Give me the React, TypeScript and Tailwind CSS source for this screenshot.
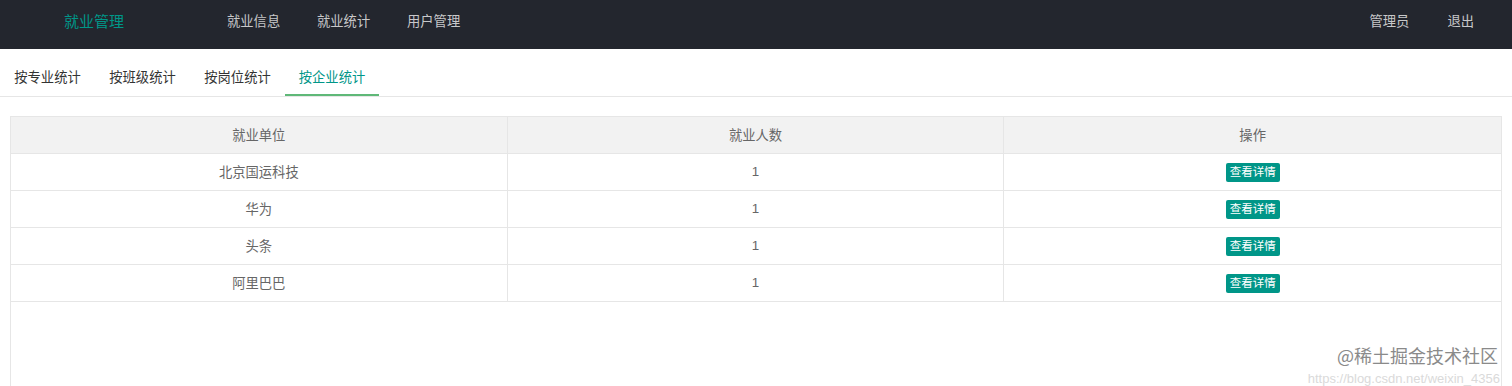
import React from 'react'

const navItems = ['就业信息', '就业统计', '用户管理']
const tabs = ['按专业统计', '按班级统计', '按岗位统计', '按企业统计']
const rows = [
  { name: '北京国运科技', count: 1 },
  { name: '华为', count: 1 },
  { name: '头条', count: 1 },
  { name: '阿里巴巴', count: 1 },
]

const font = { fontFamily: '"Noto Sans CJK SC", "Noto Sans", "Liberation Sans", sans-serif' }

const App: React.FC = () => {
  return (
    <div className="relative h-[386px] overflow-hidden bg-white" style={font}>
      {/* top bar */}
      <header className="h-[49px] bg-[#23262e]">
        <div className="flex h-[42px] items-center">
          <div className="ml-[64px] w-[163px] text-[15px] text-[#009688]">就业管理</div>
          <ul className="flex gap-[34px]">
            {navItems.map((n) => (
              <li key={n} className="w-[56px] text-[13.3px] text-white/75">{n}</li>
            ))}
          </ul>
          <ul className="ml-auto mr-[38px] flex gap-[38px]">
            <li className="text-[13.3px] text-white/75">管理员</li>
            <li className="text-[13.3px] text-white/75">退出</li>
          </ul>
        </div>
      </header>

      {/* tabs */}
      <div className="mt-[10px] flex h-[38px] border-b border-[#e6e6e6]">
        {tabs.map((t, i) => (
          <div
            key={t}
            className={
              i === 3
                ? 'flex w-[94px] items-center justify-center border-b-2 border-[#5fb878] pt-[1px] text-[13.3px] text-[#009688]'
                : 'flex w-[95px] items-center justify-center pb-[1px] text-[13.3px] text-[#333]'
            }
          >
            {t}
          </div>
        ))}
      </div>

      {/* table */}
      <div className="mx-[10px] mt-[19px] h-[300px] border border-[#e6e6e6]">
        <div className="grid h-[37px] grid-cols-3 border-b border-[#e6e6e6] bg-[#f2f2f2] text-[13.3px] text-[#666]">
          <div className="flex items-center justify-center border-r border-[#e6e6e6]">就业单位</div>
          <div className="flex items-center justify-center border-r border-[#e6e6e6]">就业人数</div>
          <div className="flex items-center justify-center">操作</div>
        </div>
        {rows.map((r) => (
          <div key={r.name} className="grid h-[37px] grid-cols-3 border-b border-[#e6e6e6] text-[13.3px] text-[#666]">
            <div className="flex items-center justify-center border-r border-[#e6e6e6]">{r.name}</div>
            <div className="flex items-center justify-center border-r border-[#e6e6e6]" style={{ fontFamily: '"Liberation Sans", sans-serif' }}>{r.count}</div>
            <div className="flex items-center justify-center">
              <span className="flex h-[19px] items-center rounded-[2px] bg-[#009688] px-[4px] text-[11.5px] text-white">查看详情</span>
            </div>
          </div>
        ))}
      </div>

      {/* watermark */}
      <div className="absolute right-[14px] top-[346px] text-[18px] leading-none text-[#8a8a8a]">@稀土掘金技术社区</div>
      <div className="absolute right-[12px] top-[372px] text-[13px] leading-none text-[#dadada]" style={{ fontFamily: '"Liberation Sans", sans-serif' }}>
        https://blog.csdn.net/weixin_4356
      </div>
    </div>
  )
}

export default App
